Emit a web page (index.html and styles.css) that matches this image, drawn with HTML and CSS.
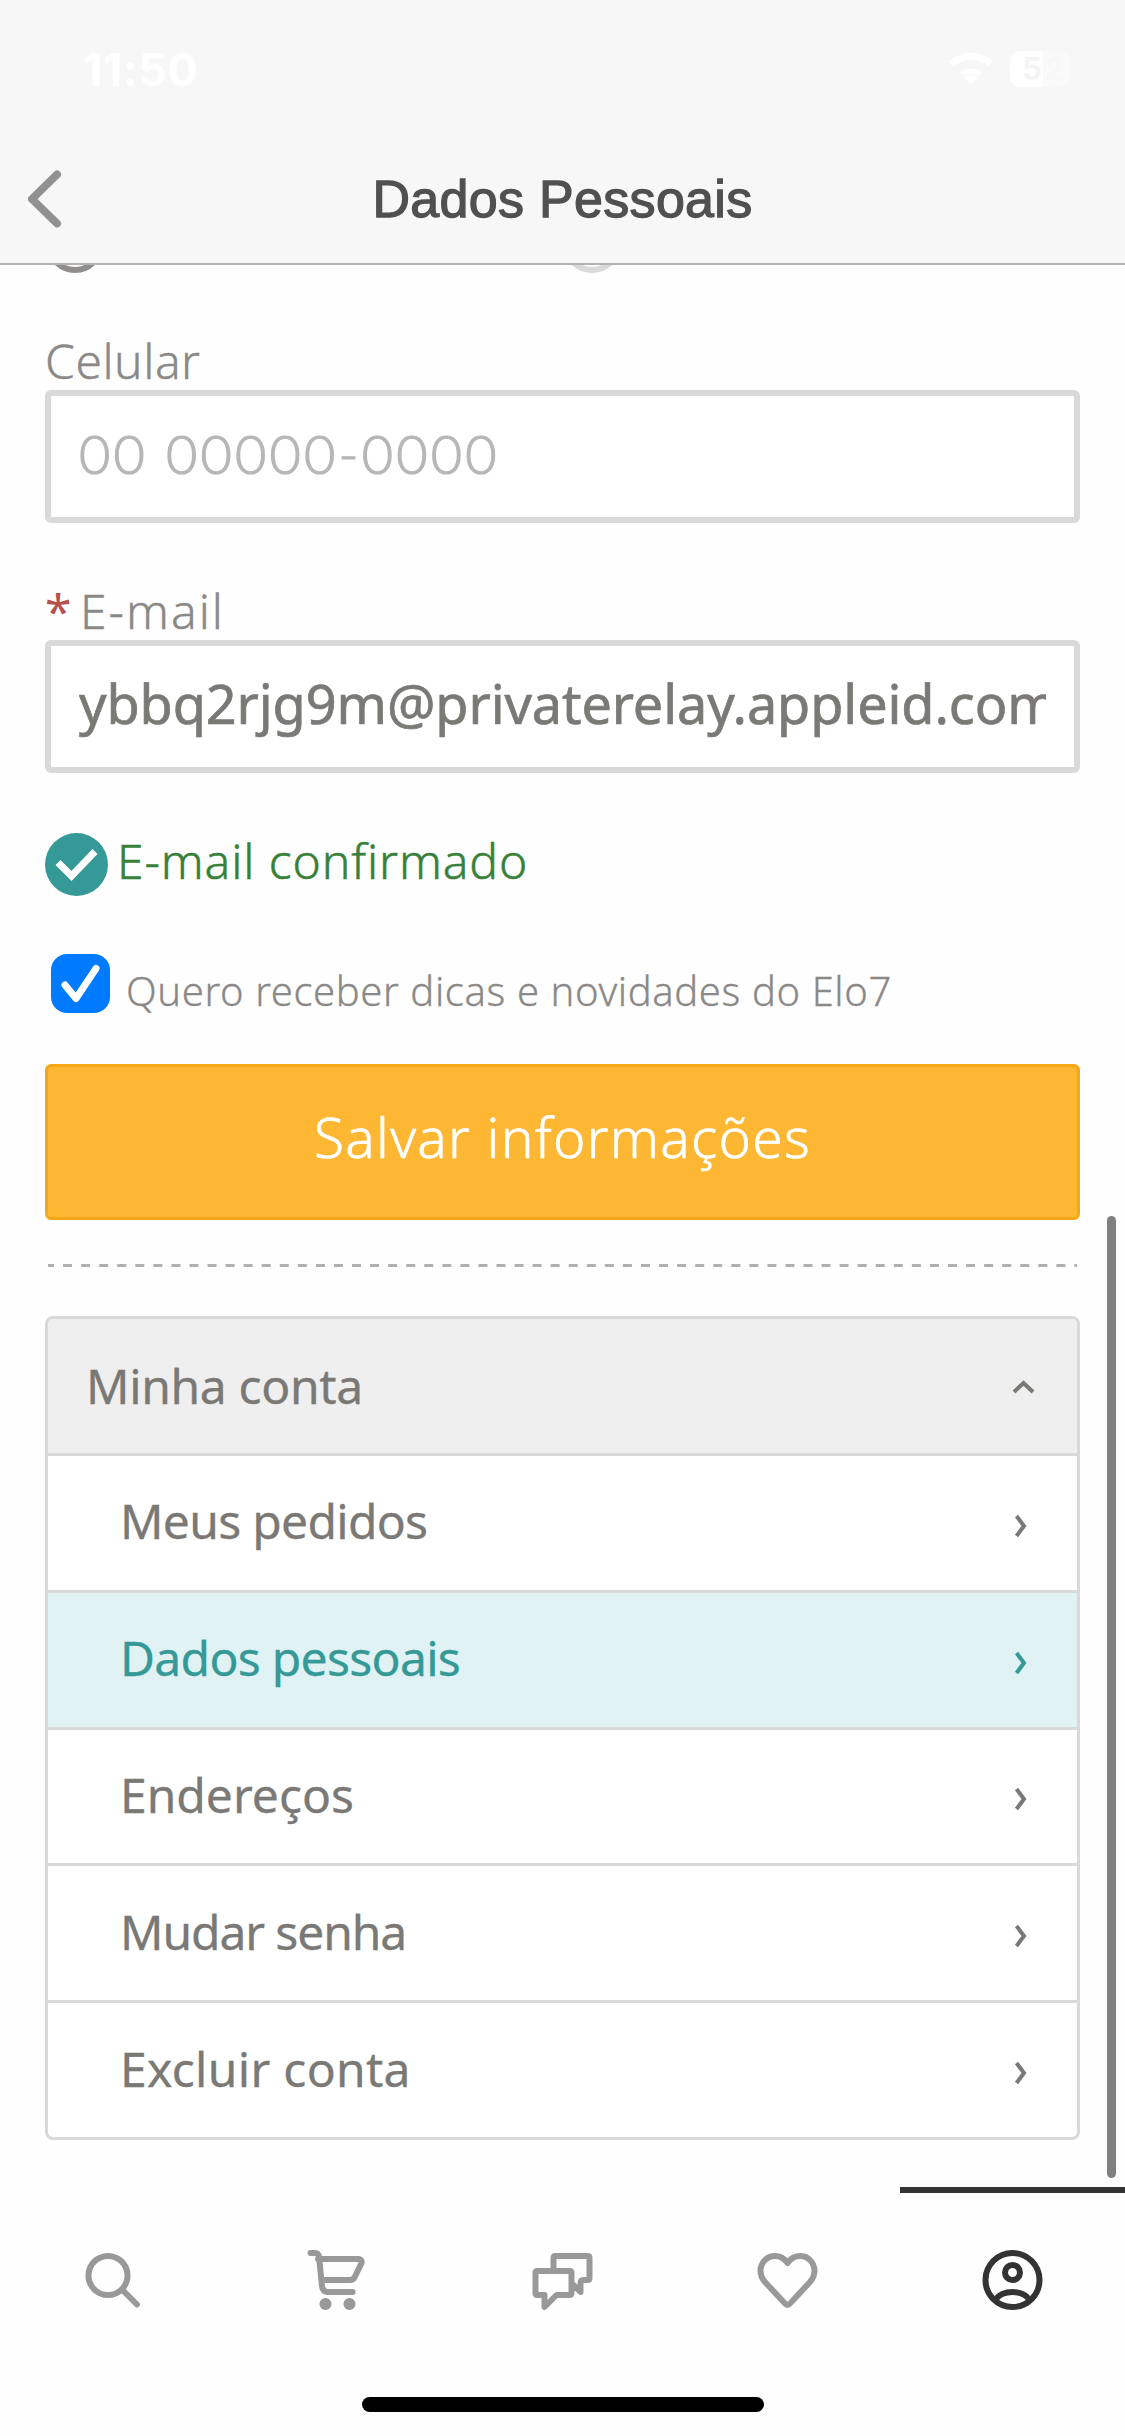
FILE: index.html
```html
<!DOCTYPE html>
<html lang="pt-BR">
<head>
<meta charset="utf-8">
<title>Dados Pessoais</title>
<link rel="stylesheet" href="styles.css">
</head>
<body>
<div class="screen">
  <header class="header">
    <div class="status">
      <span class="time">11:50</span>
      <div class="indicators">
        <svg class="wifi" viewBox="0 0 44 33"><path d="M22 33l-6.500-7a10 10 0 0 1 13 0zM11.500 21a16 16 0 0 1 21 0l-3.500 3.500a11 11 0 0 0-14 0z"/><path d="M0 10a32 32 0 0 1 44 0l-4.500 5a26 26 0 0 0-35 0z"/></svg>
        <div class="battery"><span>5</span><span>2</span></div>
      </div>
    </div>
    <div class="titlebar">
      <svg class="back" viewBox="0 0 36 60"><path d="M29 5.500L4 30l25 24.500"/></svg>
      <h1>Dados Pessoais</h1>
    </div>
  </header>

  <main class="content">
    <i class="radio radio-on"></i>
    <i class="radio radio-off"></i>

    <label class="label">Celular</label>
    <div class="input"><span class="placeholder">00 00000-0000</span></div>

    <label class="label label-email"><span class="required">*</span><span class="email-name">E-mail</span></label>
    <div class="input"><span class="value">ybbq2rjg9m@privaterelay.appleid.com</span></div>

    <div class="confirmed">
      <svg viewBox="0 0 63 63"><circle cx="31.500" cy="31.500" r="31.500"/><path d="M13 29.500L26.500 43 50 18.500"/></svg>
      <span>E-mail confirmado</span>
    </div>

    <div class="newsletter">
      <svg viewBox="0 0 59 59"><rect width="59" height="59" rx="16"/><path d="M14 31l11 13.500L45 14.500"/></svg>
      <span>Quero receber dicas e novidades do Elo7</span>
    </div>

    <div class="save">Salvar informações</div>
    <svg class="divider" viewBox="0 0 1029 3"><path d="M0 1.500H1029"/></svg>

    <nav class="menu">
      <div class="menu-head"><span>Minha conta</span><svg viewBox="0 0 24 14"><path d="M2 12l9.500-9L21 12"/></svg></div>
      <div class="item tight"><span>Meus pedidos</span><svg viewBox="0 0 14 24"><path d="M2.500 2L10 12 2.500 22"/></svg></div>
      <div class="item tight active"><span>Dados pessoais</span><svg viewBox="0 0 14 24"><path d="M2.500 2L10 12 2.500 22"/></svg></div>
      <div class="item"><span>Endereços</span><svg viewBox="0 0 14 24"><path d="M2.500 2L10 12 2.500 22"/></svg></div>
      <div class="item tighter"><span>Mudar senha</span><svg viewBox="0 0 14 24"><path d="M2.500 2L10 12 2.500 22"/></svg></div>
      <div class="item loose"><span>Excluir conta</span><svg viewBox="0 0 14 24"><path d="M2.500 2L10 12 2.500 22"/></svg></div>
    </nav>
  </main>

  <footer class="tabs">
    <div class="tab"><svg viewBox="0 0 66 66"><circle cx="28" cy="28.500" r="19.500"/><path d="M42.500 43L57 57.500"/></svg></div>
    <div class="tab"><svg viewBox="0 0 66 66"><path d="M5.500 6H10q3.500 0 4 4l3 29q.8 6 6 6h24.500M13 12h40.500q4 .5 3 4l-6.500 13.500q-1.500 3.500-5 3.500H16.500"/><circle class="solid" cx="20.500" cy="57" r="6"/><circle class="solid" cx="44.500" cy="57" r="6"/></svg></div>
    <div class="tab"><svg viewBox="0 0 66 66"><path d="M7.500 24h32q2 0 2 2v20q0 2-2 2h-13l-12 12V48h-7q-2 0-2-2V26q0-2 2-2zM23.500 24V11q0-2 2-2h32q2 0 2 2v20q0 2-2 2h-4q-3 0-3 3v9l-7-7"/></svg></div>
    <div class="tab"><svg viewBox="0 0 66 66"><path d="M32.500 16C29 11 25 9 20 9 11.500 9 5.500 16 5.500 24c0 5 2 8 4.500 11l20 21.500q2.500 2.500 5 0L55 35c2.500-3 4.500-6 4.500-11C59.500 16 53.500 9 45 9c-5 0-9 2-12.500 7z"/></svg></div>
    <div class="tab tab-active"><svg viewBox="0 0 66 66"><circle cx="32.500" cy="33" r="27"/><circle cx="32.500" cy="25.500" r="7.500"/><path d="M15.500 52.500Q21 45 32.500 45t17 7.500"/></svg></div>
  </footer>
  <div class="scrollbar"></div>
  <div class="home"></div>
</div>
</body>
</html>
```
FILE: styles.css
```css
* { box-sizing: border-box; }
body { margin: 0; background: #fefefe; }
svg { display: block; flex: none; fill: none; }

.screen {
  position: relative;
  display: flex;
  flex-direction: column;
  width: 1125px;
  height: 2436px;
  overflow: hidden;
  background: #fefefe;
  color: #7a7976;
  font-family: "Noto Sans", sans-serif;
  font-size: 48px;
}

.header { flex: none; height: 265px; background: #f7f7f7; border-bottom: 2px solid #b2b2b2; }
.status { display: flex; justify-content: space-between; height: 132px; padding: 0 55px 0 83px; color: #fff; }
.time { font: 700 45px/139px Inter, sans-serif; letter-spacing: 0.5px; }
.indicators { display: flex; gap: 17px; padding-top: 51px; }
.wifi { width: 44px; height: 34px; fill: #fff; }
.battery {
  display: flex;
  gap: 3px;
  width: 60px;
  height: 36px;
  padding-left: 12px;
  border-radius: 10px;
  background: linear-gradient(90deg, #fff 33px, #fafafa 33px);
  color: #f4f4f4;
  font: 700 31px/36px Inter, sans-serif;
}
.battery span:last-child { color: #f8f8f8; }
.titlebar { display: grid; grid-template-columns: 250px 1fr 250px; align-items: center; height: 132px; }
.back { width: 36px; height: 60px; margin-left: 28px; stroke: #919191; stroke-width: 8; stroke-linecap: round; stroke-linejoin: round; }
h1 {
  margin: 0;
  color: #505050;
  font: 400 52px/134px "Liberation Sans", sans-serif;
  letter-spacing: 0.300px;
  text-align: center;
  white-space: nowrap;
  -webkit-text-stroke: 1.300px #505050;
}

.content { position: relative; flex: none; height: 1922px; padding: 65px 45px 0; overflow: hidden; }
.radio { position: absolute; top: -50px; width: 58px; height: 58px; border: 6px solid #8f8e8c; border-radius: 50%; }
.radio-on { left: 46px; }
.radio-off { left: 563px; border-color: #d9d9d9; }

.label { display: flex; height: 60px; line-height: 62px; font-weight: 300; letter-spacing: 0.500px; color: #8a8987; -webkit-text-stroke: 0.400px #8a8987; }
.label-email { margin-top: 57px; }
.required { width: 35px; color: #b5504d; font-weight: 400; -webkit-text-stroke: 0; }
.email-name { letter-spacing: 2px; }
.input {
  display: flex;
  align-items: center;
  width: 1035px;
  height: 133px;
  padding: 0 27px 7px 28px;
  border: 6px solid #d9d9d9;
  border-radius: 6px;
  background: #fff;
  font-size: 54px;
  white-space: nowrap;
}
.placeholder { font-family: Lato, sans-serif; font-weight: 300; letter-spacing: 3.200px; color: #b7b7b5; -webkit-text-stroke: 1.200px #b7b7b5; }
.value { width: 967px; overflow: hidden; letter-spacing: -0.100px; -webkit-text-stroke: 0.700px #7a7976; }

.confirmed { display: flex; gap: 9px; height: 63px; margin-top: 60px; line-height: 55px; font-weight: 300; letter-spacing: 0.900px; color: #37803a; -webkit-text-stroke: 0.500px #37803a; }
.confirmed svg { width: 63px; height: 63px; fill: #359997; }
.confirmed path { fill: none; stroke: #fff; stroke-width: 7; }
.newsletter { display: flex; gap: 16px; height: 71px; margin-top: 58px; padding-left: 6px; font-size: 40px; font-weight: 300; line-height: 73px; letter-spacing: 0.600px; color: #8a8987; -webkit-text-stroke: 0.300px #8a8987; }
.newsletter svg { width: 59px; height: 59px; fill: #007aff; }
.newsletter path { fill: none; stroke: #fff; stroke-width: 7; stroke-linecap: round; stroke-linejoin: round; }

.save {
  display: flex;
  align-items: center;
  justify-content: center;
  height: 156px;
  margin-top: 39px;
  padding-bottom: 11px;
  border: 3px solid #f5a817;
  border-radius: 6px;
  background: #fdb733;
  color: #fff;
  font-size: 55px;
  font-weight: 300;
  letter-spacing: 1.300px;
  -webkit-text-stroke: 0.600px #fff;
}
.divider { width: 1029px; height: 3px; margin: 44px 0 49px 3px; stroke: #b0b0b0; stroke-width: 3; stroke-dasharray: 9 9.060; stroke-dashoffset: 3; }

.menu { border: 3px solid #d9d9d9; border-radius: 8px; overflow: hidden; background: #fff; -webkit-text-stroke: 0.300px; }
.menu-head, .item { display: flex; align-items: center; justify-content: space-between; height: 134px; }
.menu-head { padding: 0 41px 2px 38px; background: #efefef; letter-spacing: -0.350px; }
.menu-head svg { width: 24px; height: 14px; margin-top: 3px; stroke: #7a7976; stroke-width: 4; }
.item { height: 136.800px; padding: 0 49px 4px 72px; border-top: 3px solid #d9d9d9; }
.item svg { width: 14px; height: 24px; margin-top: 10px; stroke: #7a7976; stroke-width: 4; }
.active { background: #e0f2f4; color: #359997; }
.active svg { stroke: #359997; }
.tight { letter-spacing: -0.700px; }
.tighter { letter-spacing: -1.100px; }
.loose { letter-spacing: 0.300px; }

.tabs { display: grid; grid-template-columns: repeat(5, 1fr); flex: none; height: 249px; background: #fefefe; }
.tab { display: flex; justify-content: center; padding-top: 54px; border-top: 6px solid transparent; stroke: #999; stroke-width: 6; stroke-linecap: round; stroke-linejoin: round; }
.tab svg { width: 66px; height: 66px; }
.tab-active { border-top-color: #333; stroke: #333; }
.solid { fill: #999; stroke: none; }

.scrollbar { position: absolute; left: 1107px; top: 1216px; width: 9px; height: 962px; border-radius: 5px; background: #808080; }
.home { position: absolute; left: 362px; top: 2397px; width: 402px; height: 15px; border-radius: 8px; background: #000; }
```
